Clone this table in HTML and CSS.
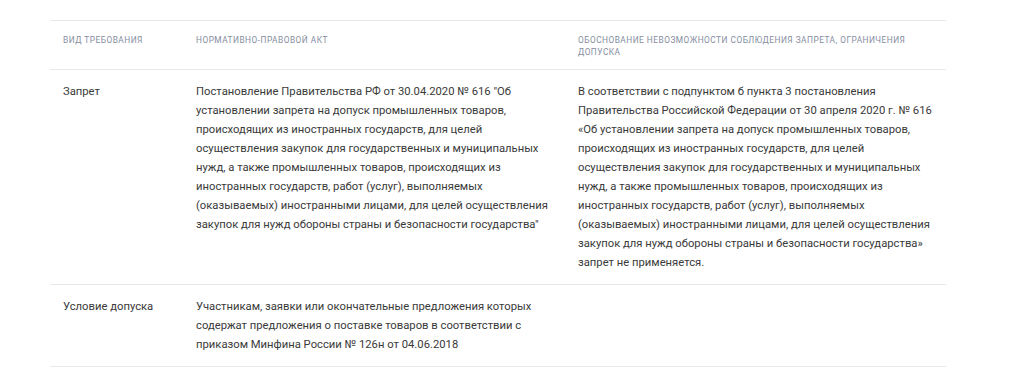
FILE: index.html
```html
<!DOCTYPE html>
<html lang="ru">
<head>
<meta charset="utf-8">
<link rel="stylesheet" href="styles.css">
</head>
<body>
<div class="wrap">
<table class="req">
  <colgroup>
    <col class="c1"><col class="c2"><col class="c3">
  </colgroup>
  <thead>
    <tr>
      <th>Вид требования</th>
      <th>Нормативно-правовой акт</th>
      <th>Обоснование невозможности соблюдения запрета, ограничения допуска</th>
    </tr>
  </thead>
  <tbody>
    <tr>
      <td>Запрет</td>
      <td>Постановление Правительства РФ от 30.04.2020 № 616 "Об установлении запрета на допуск промышленных товаров, происходящих из иностранных государств, для целей осуществления закупок для государственных и муниципальных нужд, а также промышленных товаров, происходящих из иностранных государств, работ (услуг), выполняемых (оказываемых) иностранными лицами, для целей осуществления закупок для нужд обороны страны и безопасности государства"</td>
      <td>В соответствии с подпунктом б пункта 3 постановления Правительства Российской Федерации от 30 апреля 2020 г. № 616 «Об установлении запрета на допуск промышленных товаров, происходящих из иностранных государств, для целей осуществления закупок для государственных и муниципальных нужд, а также промышленных товаров, происходящих из иностранных государств, работ (услуг), выполняемых (оказываемых) иностранными лицами, для целей осуществления закупок для нужд обороны страны и безопасности государства» запрет не применяется.</td>
    </tr>
    <tr>
      <td>Условие допуска</td>
      <td>Участникам, заявки или окончательные предложения которых содержат предложения о поставке товаров в соответствии с приказом Минфина России № 126н от 04.06.2018</td>
      <td></td>
    </tr>
  </tbody>
</table>
</div>
</body>
</html>
```

FILE: styles.css
```css
html, body {
  margin: 0;
  padding: 0;
  background: #ffffff;
}
body {
  font-family: Roboto, "Liberation Sans", Arial, sans-serif;
  color: #3a3a3a;
}
.wrap {
  padding: 20px 0 0 50px;
}
.req {
  width: 896px;
  border-collapse: collapse;
  table-layout: fixed;
}
.c1 { width: 133px; }
.c2 { width: 382px; }
.c3 { width: 381px; }
.req th,
.req td {
  text-align: left;
  vertical-align: top;
  border-top: 1px solid #e7e7ec;
  border-bottom: 1px solid #e7e7ec;
}
.req th {
  font-size: 8.3px;
  font-weight: 400;
  line-height: 12px;
  letter-spacing: 0.5px;
  text-transform: uppercase;
  color: #858da0;
  padding: 13px 13px 11px 13px;
  height: 24px;
}
.req td {
  font-size: 11.25px;
  line-height: 19px;
  padding: 12px 13px 12px 13px;
}
```
